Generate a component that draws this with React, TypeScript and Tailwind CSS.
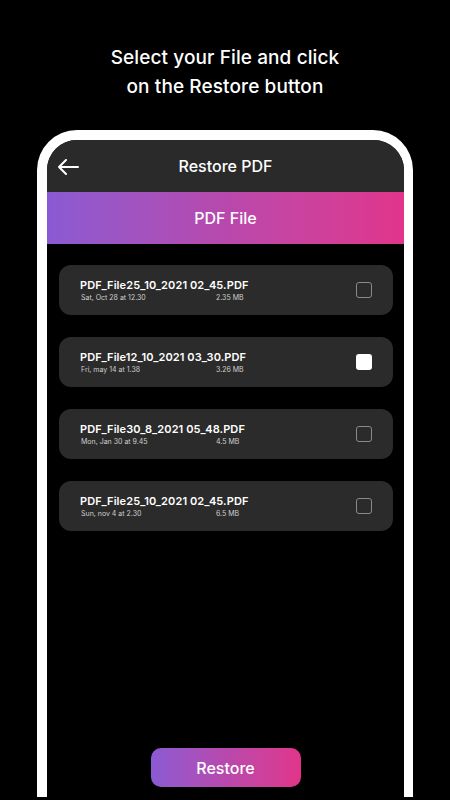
import React from "react";

const files = [
  { name: "PDF_File25_10_2021 02_45.PDF", date: "Sat, Oct 28 at 12.30", size: "2.35 MB", checked: false },
  { name: "PDF_File12_10_2021 03_30.PDF", date: "Fri, may 14 at 1.38", size: "3.26 MB", checked: true },
  { name: "PDF_File30_8_2021 05_48.PDF", date: "Mon, Jan 30 at 9.45", size: "4.5 MB", checked: false },
  { name: "PDF_File25_10_2021 02_45.PDF", date: "Sun, nov 4 at 2.30", size: "6.5 MB", checked: false },
];

export default function App() {
  return (
    <div
      className="w-[450px] h-[800px] overflow-hidden bg-black flex flex-col items-center"
      style={{ fontFamily: "Inter, 'Open Sans', sans-serif" }}
    >
      <div className="pt-[43px] text-white text-[19px] leading-[29px] font-medium text-center tracking-[0.1px]">
        <div>Select your File and click</div>
        <div>on the Restore button</div>
      </div>
      <div className="mt-[29px] w-[376px] h-[667px] border-[10px] border-b-0 border-r-[9px] border-white rounded-t-[40px] bg-black shrink-0">
        <div className="h-full rounded-t-[30px] overflow-hidden flex flex-col">
          <div className="h-[52px] bg-[#2a2a2a] relative flex items-center justify-center shrink-0">
            <svg
              className="absolute left-[11px] top-[19px]"
              width="21"
              height="16"
              viewBox="0 0 21 16"
              fill="none"
              stroke="white"
              strokeWidth="2"
              strokeLinecap="round"
              strokeLinejoin="round"
            >
              <path d="M1 8H20M8 1L1 8L8 15" />
            </svg>
            <span className="text-white text-[16px] font-medium">Restore PDF</span>
          </div>
          <div className="h-[52px] shrink-0 bg-gradient-to-r from-[#8a5ad3] via-[#b848ad] to-[#e1348a] flex items-center justify-center">
            <span className="text-white text-[16px] font-medium">PDF File</span>
          </div>
          <div className="flex flex-col gap-[22px] pt-[21px] pl-[12px] pr-[11px]">
            {files.map((f, i) => (
              <div
                key={i}
                className="h-[50px] rounded-[12px] bg-[#2b2b2b] flex items-center pl-[21px] pr-[21px]"
              >
                <div className="flex-1 flex flex-col">
                  <div className="text-white text-[11px] font-semibold leading-[14px] tracking-[0.1px]">
                    {f.name}
                  </div>
                  <div className="flex text-[#cfcfcf] text-[7px] leading-[10px] mt-[1px] pl-[1px]">
                    <span className="w-[135px]">{f.date}</span>
                    <span>{f.size}</span>
                  </div>
                </div>
                {f.checked ? (
                  <div className="w-[16px] h-[16px] rounded-[3px] bg-white" />
                ) : (
                  <div className="w-[16px] h-[16px] rounded-[3px] border-[1.5px] border-[#8a8a8a]" />
                )}
              </div>
            ))}
          </div>
          <div className="mt-auto mb-[10px] flex justify-center">
            <div className="w-[150px] h-[39px] rounded-[10px] bg-gradient-to-r from-[#8a5ad3] via-[#b848ad] to-[#e1348a] flex items-center justify-center text-white text-[16px] font-medium">
              Restore
            </div>
          </div>
        </div>
      </div>
    </div>
  );
}
